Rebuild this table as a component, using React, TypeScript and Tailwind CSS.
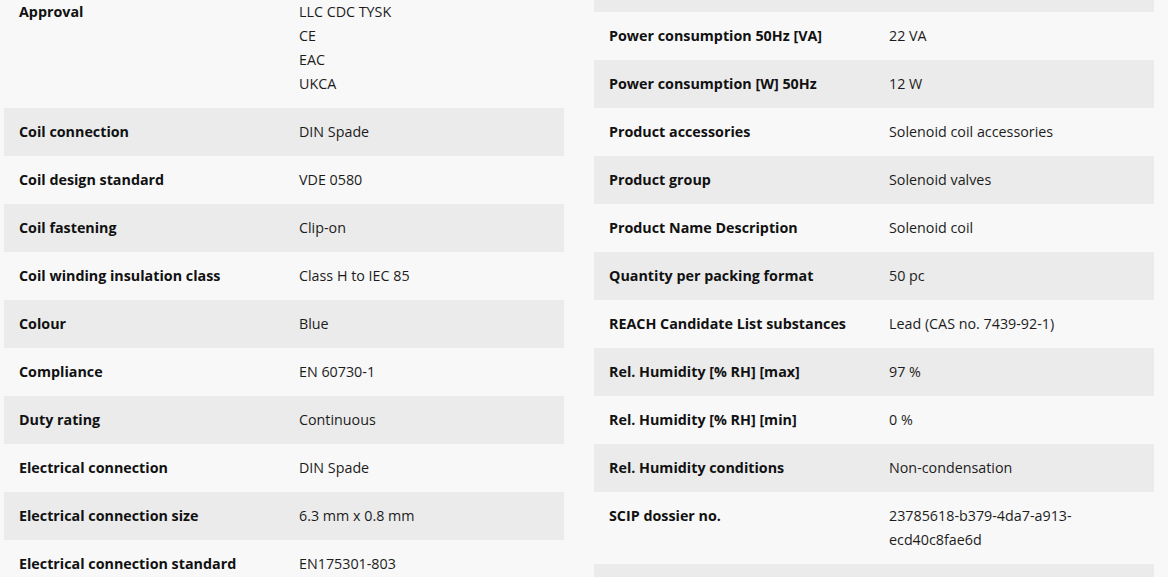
const left: [string, string[]][] = [
  ["Approval", ["LLC CDC TYSK", "CE", "EAC", "UKCA"]],
  ["Coil connection", ["DIN Spade"]],
  ["Coil design standard", ["VDE 0580"]],
  ["Coil fastening", ["Clip-on"]],
  ["Coil winding insulation class", ["Class H to IEC 85"]],
  ["Colour", ["Blue"]],
  ["Compliance", ["EN 60730-1"]],
  ["Duty rating", ["Continuous"]],
  ["Electrical connection", ["DIN Spade"]],
  ["Electrical connection size", ["6.3 mm x 0.8 mm"]],
  ["Electrical connection standard", ["EN175301-803"]],
];

const right: [string, string[]][] = [
  ["Power consumption 50Hz [VA]", ["22 VA"]],
  ["Power consumption [W] 50Hz", ["12 W"]],
  ["Product accessories", ["Solenoid coil accessories"]],
  ["Product group", ["Solenoid valves"]],
  ["Product Name Description", ["Solenoid coil"]],
  ["Quantity per packing format", ["50 pc"]],
  ["REACH Candidate List substances", ["Lead (CAS no. 7439-92-1)"]],
  ["Rel. Humidity [% RH] [max]", ["97 %"]],
  ["Rel. Humidity [% RH] [min]", ["0 %"]],
  ["Rel. Humidity conditions", ["Non-condensation"]],
  ["SCIP dossier no.", ["23785618-b379-4da7-a913-ecd40c8fae6d"]],
];

function Row({ label, values, striped }: { label: string; values: string[]; striped: boolean }) {
  return (
    <div className={`grid grid-cols-2 py-[12px] ${striped ? "bg-[#ebebeb]" : ""}`}>
      <div className="pl-[15px] pr-[14px] font-bold text-[#111]">{label}</div>
      <div className="pl-[15px] pr-[14px] text-[#1c1c1c]">
        {values.map((v) => (
          <div key={v}>{v}</div>
        ))}
      </div>
    </div>
  );
}

export default function App() {
  return (
    <div
      className="h-[577px] overflow-hidden bg-[#f8f8f8] text-[14.3px] leading-[24px]"
      style={{ fontFamily: '"Open Sans", "Noto Sans", sans-serif' }}
    >
      <div className="flex gap-[30px] pl-[4px]">
        <div className="w-[560px] -mt-[12px]">
          {left.map(([l, v], i) => (
            <Row key={l} label={l} values={v} striped={i % 2 === 1} />
          ))}
        </div>
        <div className="w-[560px]">
          <div className="h-[12px] bg-[#ebebeb]" />
          {right.map(([l, v], i) => (
            <Row key={l} label={l} values={v} striped={i % 2 === 1} />
          ))}
          <div className="h-[48px] bg-[#ebebeb]" />
        </div>
      </div>
    </div>
  );
}
